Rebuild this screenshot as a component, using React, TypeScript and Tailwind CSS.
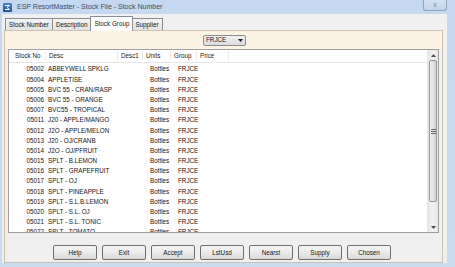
import React from "react";

const rows: [string, string][] = [
  ["05002", "ABBEYWELL SPKLG"],
  ["05004", "APPLETISE"],
  ["05005", "BVC 55 - CRAN/RASP"],
  ["05006", "BVC 55 - ORANGE"],
  ["05007", "BVC55 - TROPICAL"],
  ["05011", "J20 - APPLE/MANGO"],
  ["05012", "J2O - APPLE/MELON"],
  ["05013", "J20 - OJ/CRANB"],
  ["05014", "J2O - OJ/PFRUIT"],
  ["05015", "SPLT - B.LEMON"],
  ["05016", "SPLT - GRAPEFRUIT"],
  ["05017", "SPLT - OJ"],
  ["05018", "SPLT - PINEAPPLE"],
  ["05019", "SPLT - S.L.B.LEMON"],
  ["05020", "SPLT - S.L. OJ"],
  ["05021", "SPLT - S.L. TONIC"],
  ["05022", "SPLT - TOMATO"],
];

const buttons = ["Help", "Exit", "Accept", "LstUsd", "Nearst", "Supply", "Chosen"];

function Tab({ label, active }: { label: string; active?: boolean }) {
  if (active) {
    return (
      <div className="relative z-10 -mx-[1px] mb-[-1px] flex h-[15px] items-center border border-b-0 border-[#898c95] bg-white px-[3px] text-[6.3px] text-[#151515]">
        {label}
      </div>
    );
  }
  return (
    <div className="flex h-[12px] items-center border border-b-0 border-l-0 border-[#898c95] bg-gradient-to-b from-[#f3f3f3] to-[#e3e3e3] px-[3px] text-[6.3px] text-[#151515] first:border-l">
      {label}
    </div>
  );
}

function Scrollbar() {
  return (
    <div className="flex w-[11px] flex-col border-l border-[#e8e8e8] bg-gradient-to-r from-[#e6e6e6] via-[#f2f2f2] to-[#e6e6e6]">
      <div className="flex h-[10px] items-center justify-center">
        <svg width="5" height="3" viewBox="0 0 5 3">
          <path d="M0 3 L2.5 0 L5 3 Z" fill="#4d4d4d" />
        </svg>
      </div>
      <div className="mx-[1px] flex h-[142px] items-center justify-center rounded-[2px] border border-[#979797] bg-gradient-to-r from-[#f1f1f1] via-[#e2e2e2] to-[#cfcfcf]">
        <div className="flex flex-col gap-[1px]">
          <div className="h-[1px] w-[5px] bg-[#6b6b6b]" />
          <div className="h-[1px] w-[5px] bg-[#6b6b6b]" />
          <div className="h-[1px] w-[5px] bg-[#6b6b6b]" />
        </div>
      </div>
      <div className="flex-1" />
      <div className="flex h-[10px] items-center justify-center">
        <svg width="5" height="3" viewBox="0 0 5 3">
          <path d="M0 0 L2.5 3 L5 0 Z" fill="#4d4d4d" />
        </svg>
      </div>
    </div>
  );
}

export default function App() {
  return (
    <div className="flex h-[267px] w-[455px] flex-col overflow-hidden bg-gradient-to-b from-[#c4d9f0] to-[#c9dcf1] font-['Liberation_Sans',Arial,sans-serif] text-[#151515]">
      {/* title bar */}
      <div className="flex h-[14px] items-center">
        <div className="ml-[3px] flex h-[9px] w-[9px] items-center justify-center rounded-[1px] bg-gradient-to-b from-[#4a86c8] to-[#1d4f96]">
          <svg width="7" height="7" viewBox="0 0 7 7">
            <path d="M1 1.5 L5.5 1.5 L3 3.5 L5.5 5.5 L1 5.5" fill="none" stroke="#ffffff" strokeWidth="1" />
          </svg>
        </div>
        <span className="ml-[5px] text-[7px] text-[#3d4a5a]">ESP ResortMaster - Stock File - Stock Number</span>
        <div className="ml-auto mr-[8px] flex h-[11px] w-[24px] items-center justify-center self-start rounded-b-[3px] border border-t-0 border-[#8ea5c2] bg-gradient-to-b from-[#d2e1f2] to-[#c1d4ea] text-[7px] font-bold">
          <span className="text-[#8fa0b5]">x</span>
        </div>
      </div>

      {/* client area */}
      <div className="mb-[4px] ml-[2px] mr-[8px] flex flex-1 flex-col bg-[#f0f0f0] pl-[2px] pr-[4px] pt-[1px]">
        {/* tabs */}
        <div className="flex h-[15px] items-end pl-[1px]">
          <Tab label="Stock Number" />
          <Tab label="Description" />
          <Tab label="Stock Group" active />
          <Tab label="Supplier" />
        </div>

        {/* tab page */}
        <div className="flex flex-1 flex-col border border-[#c9c2b1] bg-[#f0f0f0]">
          <div className="flex h-[18px] items-center bg-[#fcf3e5] pl-[198px]">
            <div className="flex h-[11px] w-[43px] items-center justify-between rounded-[2px] border border-[#8c8c8c] bg-gradient-to-b from-[#f2f2f2] to-[#dcdcdc] pl-[2px] pr-[2px] text-[6.3px]">
              <span>FRJCE</span>
              <svg width="5" height="3" viewBox="0 0 5 3">
                <path d="M0 0 L2.5 3 L5 0 Z" fill="#1e1e1e" />
              </svg>
            </div>
          </div>

          {/* list */}
          <div className="mx-[3px] flex h-[184px] border border-[#a0a0a0] bg-white">
            <div className="flex flex-1 flex-col overflow-hidden">
              <div className="flex h-[13px] shrink-0 items-center border-b border-[#e5e5e5] text-[6.3px] text-[#222222]">
                <span className="w-[36px] pl-[6px]">Stock No</span>
                <span className="w-[72px] border-l border-[#eeeeee] pl-[3px]">Desc</span>
                <span className="w-[25px] border-l border-[#eeeeee] pl-[3px]">Desc1</span>
                <span className="w-[28px] border-l border-[#eeeeee] pl-[3px]">Units</span>
                <span className="w-[26px] border-l border-[#eeeeee] pl-[3px]">Group</span>
                <span className="w-[32px] border-l border-[#eeeeee] pl-[3px]">Price</span>
                <span className="flex-1 border-l border-[#eeeeee]">&nbsp;</span>
              </div>
              <div className="pt-[1px]">
                {rows.map(([no, desc]) => (
                  <div key={no} className="flex h-[10.2px] items-center text-[6.3px] text-[#151515]">
                    <span className="w-[35px] text-right">{no}</span>
                    <span className="w-[103px] pl-[4px]">{desc}</span>
                    <span className="w-[30px] pl-[3px]">Bottles</span>
                    <span className="pl-[1px]">FRJCE</span>
                  </div>
                ))}
              </div>
            </div>
            <Scrollbar />
          </div>

          {/* buttons */}
          <div className="flex flex-1 items-end justify-start gap-[5px] pb-[2px] pl-[48px]">
            {buttons.map((b) => (
              <div
                key={b}
                className="flex h-[15px] w-[44px] items-center justify-center rounded-[2px] border border-[#707070] bg-gradient-to-b from-[#f4f4f4] via-[#ebebeb] to-[#d8d8d8] text-[6.3px]"
              >
                {b}
              </div>
            ))}
          </div>
        </div>
      </div>
    </div>
  );
}
